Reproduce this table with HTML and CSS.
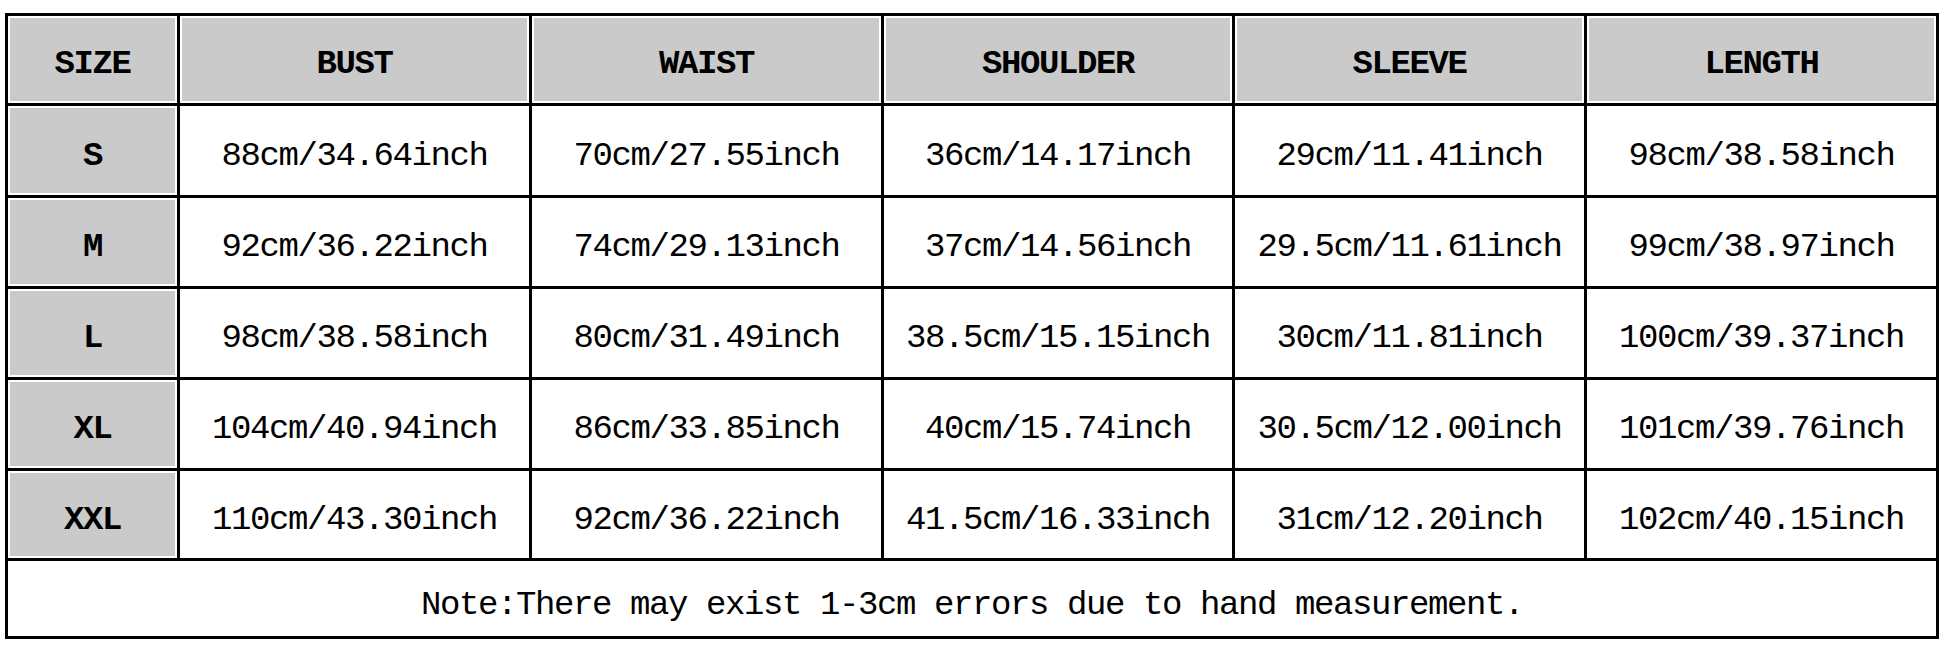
FILE: index.html
```html
<!DOCTYPE html>
<html lang="en">
<head>
<meta charset="utf-8">
<title>Size Chart</title>
<link rel="stylesheet" href="styles.css">
</head>
<body>
<table class="chart">
  <colgroup>
    <col class="c-size">
    <col class="c-wide">
    <col class="c-wide">
    <col class="c-mid">
    <col class="c-wide">
    <col class="c-wide">
  </colgroup>
  <tr class="r-head">
    <th class="gray">SIZE</th>
    <th class="gray">BUST</th>
    <th class="gray">WAIST</th>
    <th class="gray">SHOULDER</th>
    <th class="gray">SLEEVE</th>
    <th class="gray">LENGTH</th>
  </tr>
  <tr class="r-1">
    <th class="gray">S</th>
    <td>88cm/34.64inch</td>
    <td>70cm/27.55inch</td>
    <td>36cm/14.17inch</td>
    <td>29cm/11.41inch</td>
    <td>98cm/38.58inch</td>
  </tr>
  <tr class="r-2">
    <th class="gray">M</th>
    <td>92cm/36.22inch</td>
    <td>74cm/29.13inch</td>
    <td>37cm/14.56inch</td>
    <td>29.5cm/11.61inch</td>
    <td>99cm/38.97inch</td>
  </tr>
  <tr class="r-3">
    <th class="gray">L</th>
    <td>98cm/38.58inch</td>
    <td>80cm/31.49inch</td>
    <td>38.5cm/15.15inch</td>
    <td>30cm/11.81inch</td>
    <td>100cm/39.37inch</td>
  </tr>
  <tr class="r-4">
    <th class="gray">XL</th>
    <td>104cm/40.94inch</td>
    <td>86cm/33.85inch</td>
    <td>40cm/15.74inch</td>
    <td>30.5cm/12.00inch</td>
    <td>101cm/39.76inch</td>
  </tr>
  <tr class="r-5">
    <th class="gray">XXL</th>
    <td>110cm/43.30inch</td>
    <td>92cm/36.22inch</td>
    <td>41.5cm/16.33inch</td>
    <td>31cm/12.20inch</td>
    <td>102cm/40.15inch</td>
  </tr>
  <tr class="r-note">
    <td colspan="6">Note:There may exist 1-3cm errors due to hand measurement.</td>
  </tr>
</table>
</body>
</html>
```

FILE: styles.css
```css
html, body {
  margin: 0;
  padding: 0;
  background: #ffffff;
}

body {
  padding: 13px 0 0 5px;
}

.chart {
  border-collapse: separate;
  border-spacing: 0;
  table-layout: fixed;
  width: 1934px;
  border-top: 3px solid #000;
  border-left: 3px solid #000;
  font-family: "Liberation Mono", "Courier New", monospace;
  font-size: 34px;
  letter-spacing: -1.4px;
  color: #000;
}

.c-size { width: 172px; }
.c-wide { width: 352px; }
.c-mid { width: 351px; }

.chart th,
.chart td {
  border-right: 3px solid #000;
  border-bottom: 3px solid #000;
  padding: 10px 0 0 0;
  text-align: center;
  vertical-align: middle;
  white-space: nowrap;
  line-height: 1;
  box-sizing: border-box;
}

.chart th {
  font-weight: bold;
}

.chart td {
  font-weight: normal;
}

.r-head th {
  padding-top: 8px;
}

.gray {
  background: #cacaca;
  box-shadow: inset 0 0 0 2px #fff;
}

.r-head { height: 90px; }
.r-1 { height: 92px; }
.r-2 { height: 91px; }
.r-3 { height: 91px; }
.r-4 { height: 91px; }
.r-5 { height: 90px; }
.r-note { height: 78px; }

.r-note td {
  padding-top: 12px;
}
```
